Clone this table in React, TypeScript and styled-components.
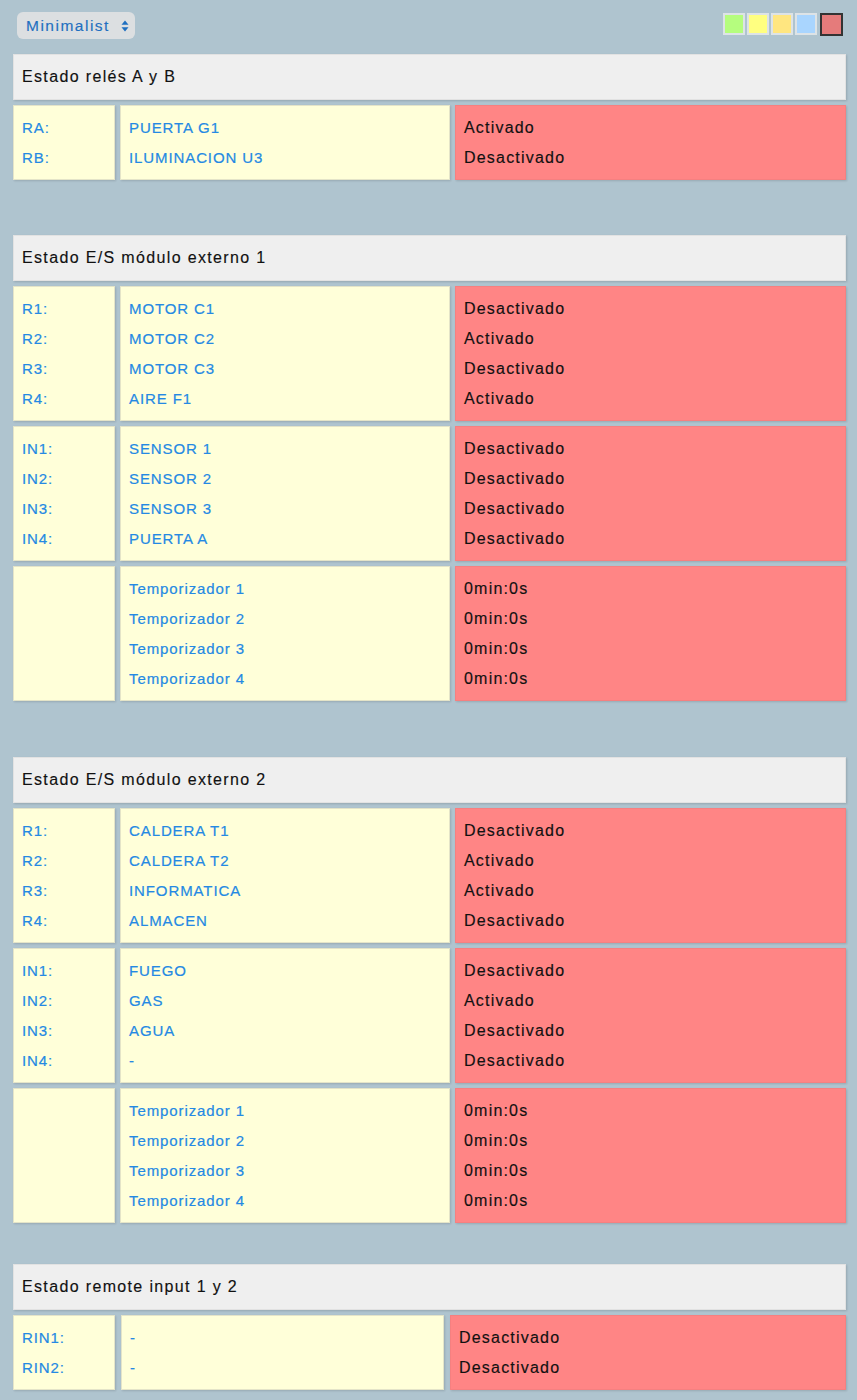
import React from "react";
import styled, { createGlobalStyle } from "styled-components";

const GlobalStyle = createGlobalStyle`
  html, body {
    margin: 0;
    padding: 0;
    background: #afc4cf;
  }
  body {
    font-family: "Liberation Sans", Arial, Helvetica, sans-serif;
  }
`;

const Page = styled.div`
  padding: 12px 11px 10px 13px;
  min-height: 1400px;
  box-sizing: border-box;
  background: #afc4cf;
`;

const TopBar = styled.div`
  display: flex;
  justify-content: space-between;
  align-items: flex-start;
  padding-left: 4px;
  padding-right: 3px;
`;

const ThemeSelect = styled.div`
  display: flex;
  align-items: center;
  justify-content: space-between;
  width: 118px;
  height: 27px;
  box-sizing: border-box;
  padding: 0 6px 0 9px;
  background: #dcdfe1;
  border-radius: 6px;
  color: #1f6fc0;
  font-size: 15.5px;
  letter-spacing: 1.5px;
  -webkit-text-stroke: 0.15px #1f6fc0;
`;

const Swatches = styled.div`
  display: flex;
  gap: 2px;
  margin-top: 1px;
`;

const Swatch = styled.div<{ $color: string; $active?: boolean }>`
  width: 22px;
  height: 22px;
  box-sizing: border-box;
  background: ${(p) => p.$color};
  border: 2px solid ${(p) => (p.$active ? "#333" : "#dde3e6")};
  ${(p) => (p.$active ? "width: 23px; height: 23px; margin-left: 1px;" : "")}
`;

const Section = styled.section<{ $gap: number }>`
  margin-top: ${(p) => p.$gap}px;
  display: flex;
  flex-direction: column;
  gap: 5px;
`;

const Header = styled.div`
  height: 46px;
  box-sizing: border-box;
  display: flex;
  align-items: center;
  padding-left: 8px;
  background: #efefef;
  border: 1px solid #e2e2e2;
  box-shadow: 1px 1px 2px rgba(0, 0, 0, 0.15);
  color: #111;
  font-size: 16px;
  letter-spacing: 1.35px;
  -webkit-text-stroke: 0.15px #111;
`;

const Row = styled.div<{ $cols: string; $gap: number }>`
  display: grid;
  grid-template-columns: ${(p) => p.$cols};
  column-gap: ${(p) => p.$gap}px;
`;

const Cell = styled.div<{ $tone: "label" | "name" | "state" }>`
  box-sizing: border-box;
  padding: 7px 8px 6px;
  background: ${(p) => (p.$tone === "state" ? "#ff8585" : "#ffffd9")};
  border: 1px solid ${(p) => (p.$tone === "state" ? "#f58080" : "#e4e4c8")};
  box-shadow: 1px 1px 2px rgba(0, 0, 0, 0.14);
  display: flex;
  flex-direction: column;
`;

const BlueLine = styled.div`
  height: 30px;
  line-height: 29px;
  font-size: 15px;
  letter-spacing: 0.9px;
  color: #2489e3;
  -webkit-text-stroke: 0.2px #2489e3;
  white-space: nowrap;
`;

const StateLine = styled.div`
  height: 30px;
  line-height: 30px;
  font-size: 16px;
  letter-spacing: 1.2px;
  color: #111;
  -webkit-text-stroke: 0.15px #111;
  white-space: nowrap;
`;

type RowData = { labels: string[]; names: string[]; states: string[] };
type SectionData = {
  title: string;
  gap: number;
  cols: string;
  colGap: number;
  rows: RowData[];
};

const timers = ["Temporizador 1", "Temporizador 2", "Temporizador 3", "Temporizador 4"];
const zeros = ["0min:0s", "0min:0s", "0min:0s", "0min:0s"];
const A = "Activado";
const D = "Desactivado";

const sections: SectionData[] = [
  {
    title: "Estado relés A y B",
    gap: 15,
    cols: "102px 330px 1fr",
    colGap: 5,
    rows: [{ labels: ["RA:", "RB:"], names: ["PUERTA G1", "ILUMINACION U3"], states: [A, D] }],
  },
  {
    title: "Estado E/S módulo externo 1",
    gap: 55,
    cols: "102px 330px 1fr",
    colGap: 5,
    rows: [
      { labels: ["R1:", "R2:", "R3:", "R4:"], names: ["MOTOR C1", "MOTOR C2", "MOTOR C3", "AIRE F1"], states: [D, A, D, A] },
      { labels: ["IN1:", "IN2:", "IN3:", "IN4:"], names: ["SENSOR 1", "SENSOR 2", "SENSOR 3", "PUERTA A"], states: [D, D, D, D] },
      { labels: [], names: timers, states: zeros },
    ],
  },
  {
    title: "Estado E/S módulo externo 2",
    gap: 56,
    cols: "102px 330px 1fr",
    colGap: 5,
    rows: [
      { labels: ["R1:", "R2:", "R3:", "R4:"], names: ["CALDERA T1", "CALDERA T2", "INFORMATICA", "ALMACEN"], states: [D, A, A, D] },
      { labels: ["IN1:", "IN2:", "IN3:", "IN4:"], names: ["FUEGO", "GAS", "AGUA", "-"], states: [D, A, D, D] },
      { labels: [], names: timers, states: zeros },
    ],
  },
  {
    title: "Estado remote input 1 y 2",
    gap: 41,
    cols: "102px 323px 1fr",
    colGap: 6,
    rows: [{ labels: ["RIN1:", "RIN2:"], names: ["-", "-"], states: [D, D] }],
  },
];

const ArrowIcon = () => (
  <svg width="8" height="12" viewBox="0 0 8 12" aria-hidden>
    <path d="M4 0.5 L7.5 4.8 L0.5 4.8 Z" fill="#1f6fc0" />
    <path d="M4 11.5 L7.5 7.2 L0.5 7.2 Z" fill="#1f6fc0" />
  </svg>
);

export default function App() {
  return (
    <>
      <GlobalStyle />
      <Page>
        <TopBar>
          <ThemeSelect>
            <span>Minimalist</span>
            <ArrowIcon />
          </ThemeSelect>
          <Swatches>
            <Swatch $color="#b5fd7e" />
            <Swatch $color="#ffff80" />
            <Swatch $color="#ffe680" />
            <Swatch $color="#a9d5fe" />
            <Swatch $color="#e57b7b" $active />
          </Swatches>
        </TopBar>
        {sections.map((s) => (
          <Section key={s.title} $gap={s.gap}>
            <Header>{s.title}</Header>
            {s.rows.map((r, i) => (
              <Row key={i} $cols={s.cols} $gap={s.colGap}>
                <Cell $tone="label">
                  {r.labels.map((l) => (
                    <BlueLine key={l}>{l}</BlueLine>
                  ))}
                </Cell>
                <Cell $tone="name">
                  {r.names.map((n, j) => (
                    <BlueLine key={j}>{n}</BlueLine>
                  ))}
                </Cell>
                <Cell $tone="state">
                  {r.states.map((st, j) => (
                    <StateLine key={j}>{st}</StateLine>
                  ))}
                </Cell>
              </Row>
            ))}
          </Section>
        ))}
      </Page>
    </>
  );
}
